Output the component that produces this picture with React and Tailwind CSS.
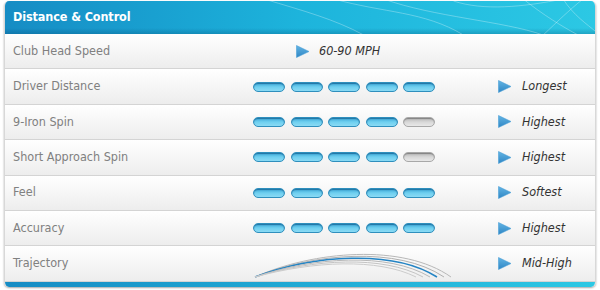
import React from "react";

const ROWS = [
  { label: "Club Head Speed", value: "60-90 MPH", type: "speed" },
  { label: "Driver Distance", value: "Longest", bars: 5 },
  { label: "9-Iron Spin", value: "Highest", bars: 4 },
  { label: "Short Approach Spin", value: "Highest", bars: 4 },
  { label: "Feel", value: "Softest", bars: 5 },
  { label: "Accuracy", value: "Highest", bars: 5 },
  { label: "Trajectory", value: "Mid-High", type: "trajectory" },
];

function Arrow() {
  return (
    <svg width="13" height="13" viewBox="0 0 13 13" className="shrink-0">
      <defs>
        <linearGradient id="arr" x1="0" y1="0" x2="0" y2="1">
          <stop offset="0" stopColor="#62b4e4" />
          <stop offset="1" stopColor="#2f86c4" />
        </linearGradient>
      </defs>
      <polygon points="0.5,0.5 13,6.5 0.5,12.5" fill="url(#arr)" strokeLinejoin="round" stroke="#4a9fd6" strokeWidth="0.6" />
    </svg>
  );
}

function Pill({ on }) {
  return on ? (
    <div className="w-[32px] h-[10px] rounded-full border border-[#2f8fbd] bg-gradient-to-b from-[#3aa6d6] via-[#6fd0f0] to-[#8adaf4] shadow-[inset_0_1px_1px_rgba(0,60,110,0.5)]" />
  ) : (
    <div className="w-[32px] h-[10px] rounded-full border border-[#a8a8a8] bg-gradient-to-b from-[#b4b4b4] via-[#d8d8d8] to-[#e8e8e8] shadow-[inset_0_1px_1px_rgba(0,0,0,0.3)]" />
  );
}

function Trajectory() {
  return (
    <svg width="200" height="30" viewBox="0 0 200 30">
      <path d="M2 28 C60 2 150 -6 198 28" fill="none" stroke="#b8b8b8" strokeWidth="1" />
      <path d="M2 28 C60 4 145 -3 191 28" fill="none" stroke="#b0b0b0" strokeWidth="1" />
      <path d="M2 28 C60 6 140 0 184 28" fill="none" stroke="#2484c4" strokeWidth="1.5" />
      <path d="M2 28 C60 8 135 3 177 28" fill="none" stroke="#b8b8b8" strokeWidth="1" />
      <path d="M2 28 C60 10 130 6 170 28" fill="none" stroke="#c4c4c4" strokeWidth="1" />
      <path d="M2 28 C60 12 125 9 163 28" fill="none" stroke="#cccccc" strokeWidth="1" />
    </svg>
  );
}

function HeaderArt() {
  return (
    <svg className="absolute inset-0 w-full h-full" viewBox="0 0 592 33" preserveAspectRatio="none">
      <g fill="none" stroke="#ffffff" strokeOpacity="0.3" strokeWidth="1">
        <path d="M260 -2 C300 10 330 18 360 34" />
        <path d="M330 -2 C380 12 420 10 460 34" />
        <path d="M380 -2 C430 16 500 20 540 34" />
        <path d="M450 0 C480 10 520 6 560 -2" />
        <path d="M520 -2 C540 14 560 26 575 34" />
        <path d="M540 34 C555 20 565 10 580 -2" />
        <path d="M560 -2 C570 14 585 24 592 30" />
      </g>
    </svg>
  );
}

export default function App() {
  return (
    <div className="w-[600px] h-[290px] bg-white pt-[1px] px-[4px]" style={{ fontFamily: '"DejaVu Sans Condensed", "DejaVu Sans", Tahoma, sans-serif' }}>
      <div className="w-[592px] rounded-[5px] overflow-hidden shadow-[0_1px_2px_rgba(0,0,0,0.35)] border-x border-[#d8d8d8]">
        <div className="relative h-[33px] bg-gradient-to-r from-[#168cc4] via-[#1db4dc] to-[#2cc8e4] flex items-center px-[8px]">
          <div className="absolute inset-x-0 bottom-0 h-[6px] bg-gradient-to-b from-transparent to-[rgba(0,60,100,0.25)]" />
          <HeaderArt />
          <span className="relative text-white font-bold text-[12.5px] tracking-[-0.1px]">Distance &amp; Control</span>
        </div>
        {ROWS.map((r) => (
          <div key={r.label} className="h-[35.4px] flex items-center border-b border-[#d4d4d4] bg-gradient-to-b from-white to-[#ededed]">
            <div className="w-[248px] pl-[8px] text-[12.5px] text-[#808080]">{r.label}</div>
            {r.type === "speed" ? (
              <div className="flex items-center gap-[10px] pl-[43px]">
                <Arrow />
                <span className="italic text-[12.5px] text-[#333]">{r.value}</span>
              </div>
            ) : (
              <>
                <div className="w-[245px] flex items-center">
                  {r.type === "trajectory" ? (
                    <Trajectory />
                  ) : (
                    <div className="flex gap-[5.5px]">
                      {[0, 1, 2, 3, 4].map((i) => (
                        <Pill key={i} on={i < r.bars} />
                      ))}
                    </div>
                  )}
                </div>
                <div className="flex items-center gap-[11px]">
                  <Arrow />
                  <span className="italic text-[12.5px] text-[#333]">{r.value}</span>
                </div>
              </>
            )}
          </div>
        ))}
        <div className="h-[5px] bg-gradient-to-r from-[#168cc4] to-[#2cc8e4]" />
      </div>
    </div>
  );
}
